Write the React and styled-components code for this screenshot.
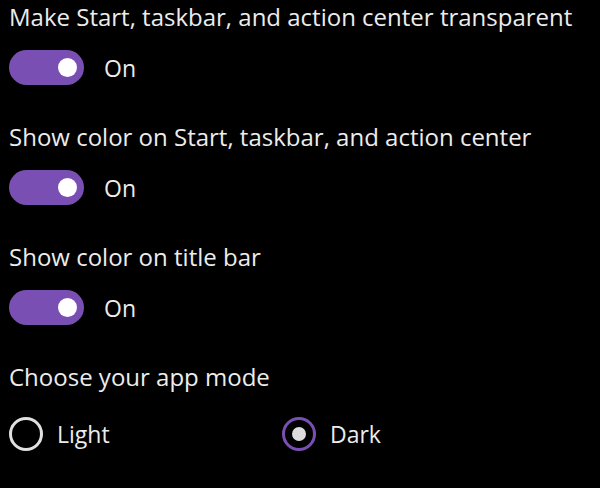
import styled, { createGlobalStyle } from 'styled-components';

const GlobalStyle = createGlobalStyle`
  html, body {
    margin: 0;
    background: #000;
  }
  body {
    font-family: "Open Sans", "Noto Sans", sans-serif;
    color: #ececec;
  }
`;

const Page = styled.div`
  width: 600px;
  height: 488px;
  padding: 1px 0 0 9px;
  box-sizing: border-box;
  overflow: hidden;
`;

const Section = styled.div`
  height: 120px;
  display: flex;
  flex-direction: column;
`;

const Title = styled.div`
  font-size: 24px;
  line-height: 32px;
  white-space: nowrap;
`;

const ToggleRow = styled.div`
  display: flex;
  align-items: center;
  gap: 20px;
  margin-top: 17px;
`;

const Track = styled.div`
  width: 75px;
  height: 35px;
  border-radius: 18px;
  background: ${(p) => (p.on ? '#7a4fb3' : 'transparent')};
  display: flex;
  align-items: center;
  justify-content: ${(p) => (p.on ? 'flex-end' : 'flex-start')};
  padding: 0 7px;
  box-sizing: border-box;
`;

const Knob = styled.div`
  width: 19px;
  height: 19px;
  border-radius: 50%;
  background: #fff;
`;

const StateLabel = styled.span`
  font-size: 23px;
  line-height: 28px;
`;

const RadioRow = styled.div`
  display: grid;
  grid-template-columns: 273px auto;
  margin-top: 24px;
`;

const RadioOption = styled.div`
  display: flex;
  align-items: center;
  gap: 14px;
`;

const Circle = styled.div`
  width: 34px;
  height: 34px;
  border-radius: 50%;
  border: 3px solid ${(p) => (p.checked ? '#7a4fb3' : '#e0e0e0')};
  box-sizing: border-box;
  display: flex;
  align-items: center;
  justify-content: center;
`;

const Dot = styled.div`
  width: 14px;
  height: 14px;
  border-radius: 50%;
  background: #dcdcdc;
`;

const Toggle = ({ label, on }) => (
  <Section>
    <Title>{label}</Title>
    <ToggleRow>
      <Track on={on}>
        <Knob />
      </Track>
      <StateLabel>{on ? 'On' : 'Off'}</StateLabel>
    </ToggleRow>
  </Section>
);

const Radio = ({ label, checked }) => (
  <RadioOption>
    <Circle checked={checked}>{checked && <Dot />}</Circle>
    <StateLabel>{label}</StateLabel>
  </RadioOption>
);

export default function App() {
  return (
    <Page>
      <GlobalStyle />
      <Toggle label="Make Start, taskbar, and action center transparent" on />
      <Toggle label="Show color on Start, taskbar, and action center" on />
      <Toggle label="Show color on title bar" on />
      <Section>
        <Title>Choose your app mode</Title>
        <RadioRow>
          <Radio label="Light" />
          <Radio label="Dark" checked />
        </RadioRow>
      </Section>
    </Page>
  );
}
